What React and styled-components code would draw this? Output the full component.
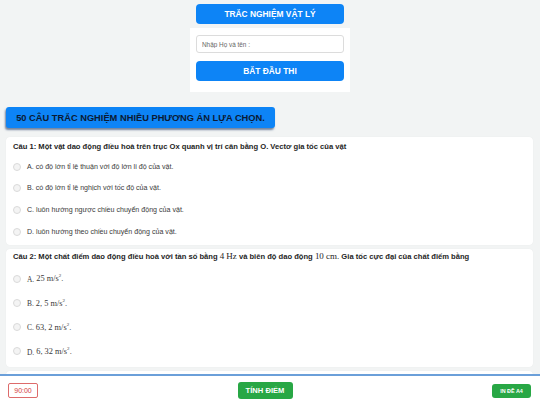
import React from 'react';
import styled, { createGlobalStyle } from 'styled-components';

function getQuestions() {
  return [
    {
      title: 'Câu 1: Một vật dao động điều hoà trên trục Ox quanh vị trí cân bằng O. Vectơ gia tốc của vật',
      options: [
        'A. có độ lớn tỉ lệ thuận với độ lớn li độ của vật.',
        'B. có độ lớn tỉ lệ nghịch với tốc độ của vật.',
        'C. luôn hướng ngược chiều chuyển động của vật.',
        'D. luôn hướng theo chiều chuyển động của vật.',
      ],
    },
    {
      title: (
        <>
          Câu 2: Một chất điểm dao động điều hoà với tần số bằng <MathText>4 Hz</MathText> và biên độ dao động{' '}
          <MathText>10 cm.</MathText> Gia tốc cực đại của chất điểm bằng
        </>
      ),
      math: true,
      options: ['A. 25', 'B. 2, 5', 'C. 63, 2', 'D. 6, 32'],
    },
    {
      title: 'Câu 3: Một con lắc lò xo dao động điều hoà',
      options: [],
    },
  ];
}

function renderOption(text, math) {
  if (!math) return text;
  const [letter, ...rest] = text.split(' ');
  return (
    <>
      <Letter>{letter}</Letter> <MathText>{rest.join(' ')} m/s<sup>2</sup>.</MathText>
    </>
  );
}

class App extends React.Component {
  renderQuestion(q, i) {
    return (
      <Card key={i} $tight={q.math}>
        <QuestionTitle>{q.title}</QuestionTitle>
        <Options>
          {q.options.map((o, j) => (
            <OptionRow key={j} $tall={q.math}>
              <Radio />
              <OptionText>{renderOption(o, q.math)}</OptionText>
            </OptionRow>
          ))}
        </Options>
      </Card>
    );
  }

  render() {
    return (
      <Page>
        <GlobalStyle />
        <Intro>
          <BlueButton>TRẮC NGHIỆM VẬT LÝ</BlueButton>
          <Panel>
            <NameInput placeholder="Nhập Họ và tên :" />
            <BlueButton>BẮT ĐẦU THI</BlueButton>
          </Panel>
        </Intro>
        <Banner>50 CÂU TRẮC NGHIỆM NHIỀU PHƯƠNG ÁN LỰA CHỌN.</Banner>
        <Questions>{getQuestions().map((q, i) => this.renderQuestion(q, i))}</Questions>
        <Footer>
          <Timer>90:00</Timer>
          <GreenButton>TÍNH ĐIỂM</GreenButton>
          <GreenButton $small>IN ĐỀ A4</GreenButton>
        </Footer>
      </Page>
    );
  }
}

const GlobalStyle = createGlobalStyle`
  html, body {
    margin: 0;
    padding: 0;
    height: 100%;
    overflow: hidden;
    background: #f2f4f4;
    font-family: "Liberation Sans", Arial, sans-serif;
  }
`;

const Page = styled.div`
  display: flex;
  flex-direction: column;
  padding-top: 4px;
`;

const Intro = styled.div`
  display: flex;
  flex-direction: column;
  align-items: center;
  gap: 4px;
`;

const BlueButton = styled.button`
  width: 148px;
  height: 20px;
  border: none;
  border-radius: 4px;
  background: #0d84f6;
  color: #fff;
  font-family: inherit;
  font-weight: bold;
  font-size: 8.4px;
  padding: 0;
`;

const Panel = styled.div`
  width: 148px;
  background: #fff;
  padding: 7px 6px 11px;
  display: flex;
  flex-direction: column;
  gap: 8px;
`;

const NameInput = styled.input`
  box-sizing: border-box;
  width: 148px;
  height: 18px;
  border: 1px solid #dcdcdc;
  border-radius: 3px;
  padding: 0 5px;
  font-family: inherit;
  font-size: 6.4px;
  outline: none;
  &::placeholder {
    color: #666;
  }
`;

const Banner = styled.div`
  align-self: flex-start;
  margin: 15px 0 0 6px;
  width: 269px;
  height: 21px;
  box-sizing: border-box;
  display: flex;
  align-items: center;
  justify-content: center;
  background: #0d84f6;
  border-radius: 3px;
  box-shadow: -1px 2px 2px rgba(10, 40, 90, 0.55);
  color: #0b1a33;
  font-weight: bold;
  font-size: 9.3px;
`;

const Questions = styled.div`
  display: flex;
  flex-direction: column;
  gap: 4px;
  margin: 9px 7px 0 6px;
`;

const Card = styled.div`
  background: #fff;
  border-radius: 4px;
  padding: ${(p) => (p.$tight ? '2px' : '4px')} 7px 3px;
  box-shadow: 0 0 1px rgba(0, 0, 0, 0.08);
`;

const QuestionTitle = styled.div`
  font-weight: bold;
  font-size: 7.6px;
  line-height: 11px;
  color: #1e1e1e;
`;

const MathText = styled.span`
  font-family: "Liberation Serif", "DejaVu Serif", serif;
  font-weight: normal;
  font-size: 1.18em;
  sup {
    font-size: 0.6em;
  }
`;

const Letter = styled.span`
  font-family: "Liberation Serif", "DejaVu Serif", serif;
  font-size: 1.05em;
`;

const Options = styled.div`
  display: flex;
  flex-direction: column;
  margin-top: 4px;
`;

const OptionRow = styled.div`
  display: flex;
  align-items: center;
  gap: 6px;
  height: ${(p) => (p.$tall ? '24.3px' : '21.6px')};
`;

const Radio = styled.span`
  box-sizing: border-box;
  width: 8px;
  height: 8px;
  border-radius: 50%;
  border: 1px solid #dadada;
  background: #f4f4f4;
  flex-shrink: 0;
`;

const OptionText = styled.span`
  font-size: 7.1px;
  color: #3a3a3a;
`;

const Footer = styled.div`
  position: fixed;
  left: 0;
  right: 0;
  bottom: 0;
  height: 31px;
  box-sizing: border-box;
  background: #fff;
  border-top: 2px solid #6b9fd9;
  display: flex;
  align-items: center;
  justify-content: space-between;
  padding: 0 9px 0 8px;
`;

const Timer = styled.div`
  width: 30px;
  height: 15px;
  box-sizing: border-box;
  border: 1px solid #dd6b6b;
  border-radius: 2px;
  color: #d43c3c;
  font-size: 7px;
  display: flex;
  align-items: center;
  justify-content: center;
`;

const GreenButton = styled.button`
  width: ${(p) => (p.$small ? '39px' : '55px')};
  height: ${(p) => (p.$small ? '14px' : '17px')};
  border: none;
  border-radius: 3px;
  background: #28a745;
  color: #fff;
  font-family: inherit;
  font-weight: bold;
  font-size: ${(p) => (p.$small ? '5.4px' : '7.6px')};
  padding: 0;
`;

export default App;
